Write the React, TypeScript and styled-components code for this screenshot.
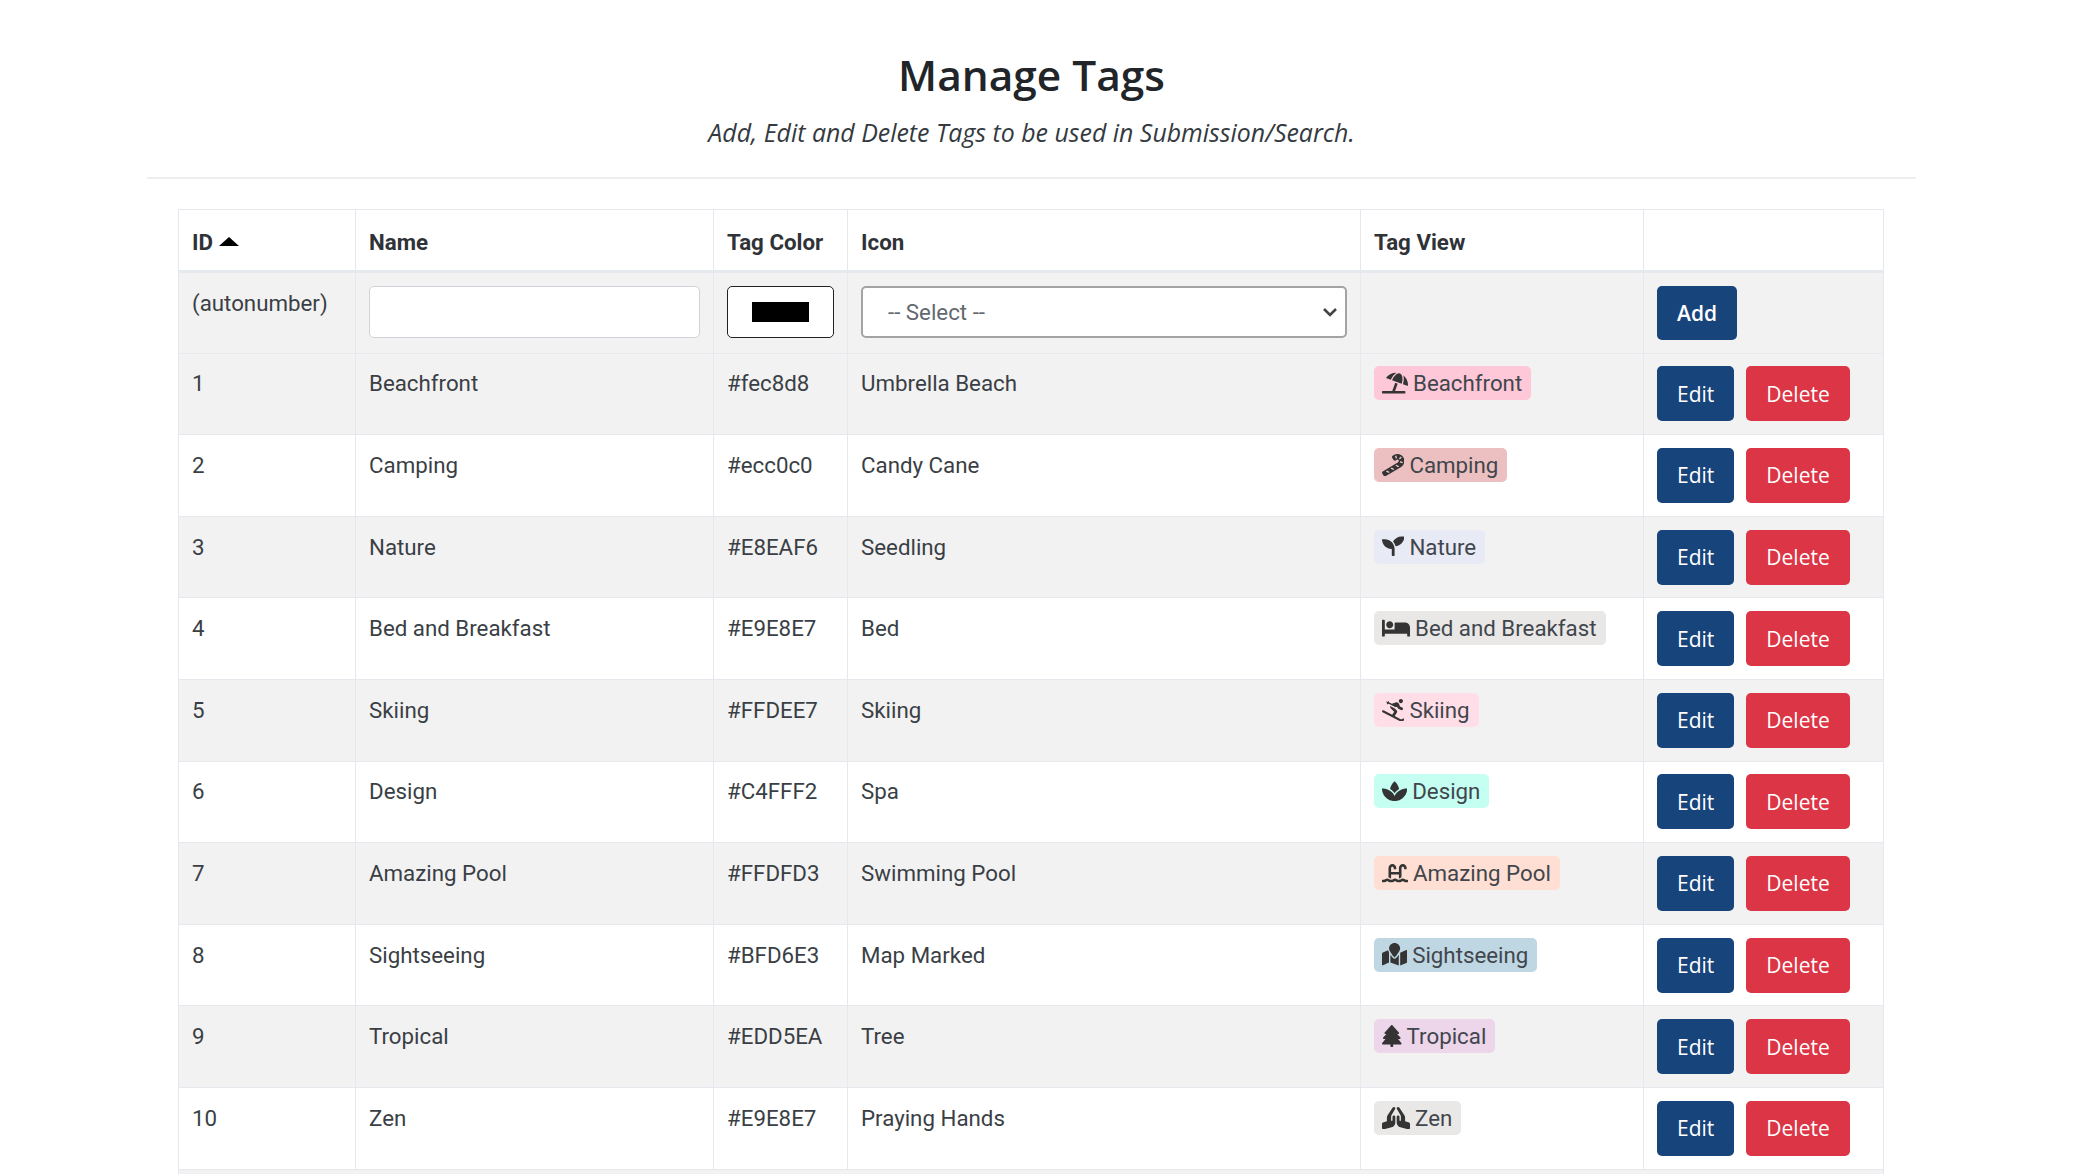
import React from 'react'
import styled, { createGlobalStyle } from 'styled-components'
import {
  FaUmbrellaBeach,
  FaCandyCane,
  FaSeedling,
  FaBed,
  FaSkiing,
  FaSpa,
  FaSwimmingPool,
  FaMapMarked,
  FaPrayingHands
} from 'react-icons/fa'
import { FaTree } from 'react-icons/fa6'

const GlobalStyle = createGlobalStyle`
  html, body {
    margin: 0;
    height: 100%;
    overflow: hidden;
    background: #fff;
  }
  body {
    font-family: Roboto, "Liberation Sans", sans-serif;
    font-size: 22.3px;
    color: #3a3f45;
  }
`

const Page = styled.div`
  width: 1769px;
  margin-left: 147px;
`

const Header = styled.header`
  height: 179px;
  padding-top: 45px;
  box-sizing: border-box;
  border-bottom: 2px solid #eceeef;
  text-align: center;
`

const Title = styled.h1`
  margin: 0;
  font-family: "Open Sans", sans-serif;
  font-size: 42.4px;
  line-height: 60px;
  font-weight: 600;
  color: #212529;
`

const Subtitle = styled.p`
  margin: 10px 0 0;
  font-family: "Open Sans", sans-serif;
  font-size: 24.9px;
  line-height: 34px;
  font-style: italic;
  font-weight: 400;
  color: #343a40;
`

const TableWrap = styled.div`
  padding: 30px 32px 0 31px;
`

const Table = styled.table`
  width: 100%;
  table-layout: fixed;
  border-collapse: collapse;
`

const Th = styled.th`
  height: 62px;
  padding: 3px 13px 0;
  text-align: left;
  font-weight: 700;
  color: #2f3338;
  border: 1.5px solid #e5e9ed;
  border-bottom-width: 3px;
  box-sizing: border-box;
`

const SortArrow = styled.span`
  display: inline-block;
  margin-left: 6px;
  vertical-align: 4px;
  border-left: 10px solid transparent;
  border-right: 10px solid transparent;
  border-bottom: 9px solid #000;
`

const Row = styled.tr<{ $striped: boolean }>`
  background: ${({ $striped }) => ($striped ? '#f2f2f2' : '#fff')};
`

const Td = styled.td`
  padding: 12.8px 13px;
  vertical-align: top;
  border: 1.5px solid #e5e9ed;
  line-height: 34px;
`

const NameInput = styled.input`
  display: block;
  width: 100%;
  height: 52px;
  box-sizing: border-box;
  border: 1.5px solid #ced4da;
  border-radius: 5px;
  background: #fff;
`

const ColorInput = styled.input`
  display: block;
  width: 100%;
  height: 52px;
  box-sizing: border-box;
  padding: 15px 24px;
  border: 1.5px solid #222;
  border-radius: 5px;
  background: #fff;
  &::-webkit-color-swatch-wrapper {
    padding: 0;
  }
  &::-webkit-color-swatch {
    border: 0;
  }
`

const Select = styled.select`
  display: block;
  width: 100%;
  height: 52px;
  box-sizing: border-box;
  padding: 0 25px;
  appearance: none;
  border: 2px solid #a3a3a3;
  border-radius: 5px;
  color: #62686e;
  font-family: Roboto, sans-serif;
  font-size: 22.3px;
  background: #fff url("data:image/svg+xml,%3Csvg xmlns='http://www.w3.org/2000/svg' viewBox='0 0 16 10'%3E%3Cpath d='M2 2l6 6 6-6' fill='none' stroke='%23444' stroke-width='2.6'/%3E%3C/svg%3E") no-repeat right 7px center / 16px 10px;
`

const TagPill = styled.span<{ $color: string; $iconWidth: number }>`
  display: inline-flex;
  align-items: center;
  height: 34px;
  padding: 0 9px 0 8px;
  border-radius: 5px;
  background: ${({ $color }) => $color};
  color: #41464c;
  line-height: 34px;
  white-space: nowrap;

  svg {
    width: ${({ $iconWidth }) => $iconWidth}px;
    height: 22.4px;
    margin-right: 5px;
    color: #343434;
  }
`

const Actions = styled.div`
  display: flex;
  gap: 12px;
`

const Button = styled.button<{ $variant: 'primary' | 'danger'; $bold?: boolean }>`
  height: 55px;
  padding: 0 20px;
  border: 0;
  border-radius: 5px;
  color: #fff;
  font-family: "Open Sans", sans-serif;
  font-size: 21px;
  font-weight: ${({ $bold }) => ($bold ? 600 : 400)};
  background: ${({ $variant }) => ($variant === 'primary' ? '#17447a' : '#dc3545')};
`

const AddButton = styled(Button)`
  height: 54px;
  padding: 0 20px;
`

const tags = [
  { id: 1, name: 'Beachfront', color: '#fec8d8', icon: 'Umbrella Beach', Glyph: FaUmbrellaBeach, iconWidth: 26 },
  { id: 2, name: 'Camping', color: '#ecc0c0', icon: 'Candy Cane', Glyph: FaCandyCane, iconWidth: 22.4 },
  { id: 3, name: 'Nature', color: '#E8EAF6', icon: 'Seedling', Glyph: FaSeedling, iconWidth: 22.4 },
  { id: 4, name: 'Bed and Breakfast', color: '#E9E8E7', icon: 'Bed', Glyph: FaBed, iconWidth: 28 },
  { id: 5, name: 'Skiing', color: '#FFDEE7', icon: 'Skiing', Glyph: FaSkiing, iconWidth: 22.4 },
  { id: 6, name: 'Design', color: '#C4FFF2', icon: 'Spa', Glyph: FaSpa, iconWidth: 25.2 },
  { id: 7, name: 'Amazing Pool', color: '#FFDFD3', icon: 'Swimming Pool', Glyph: FaSwimmingPool, iconWidth: 26 },
  { id: 8, name: 'Sightseeing', color: '#BFD6E3', icon: 'Map Marked', Glyph: FaMapMarked, iconWidth: 25.2 },
  { id: 9, name: 'Tropical', color: '#EDD5EA', icon: 'Tree', Glyph: FaTree, iconWidth: 19.6 },
  { id: 10, name: 'Zen', color: '#E9E8E7', icon: 'Praying Hands', Glyph: FaPrayingHands, iconWidth: 28 }
]

export default function App() {
  return (
    <Page>
      <GlobalStyle />
      <Header>
        <Title>Manage Tags</Title>
        <Subtitle>Add, Edit and Delete Tags to be used in Submission/Search.</Subtitle>
      </Header>
      <TableWrap>
        <Table>
          <colgroup>
            <col style={{ width: 177 }} />
            <col style={{ width: 358 }} />
            <col style={{ width: 134 }} />
            <col style={{ width: 513 }} />
            <col style={{ width: 283 }} />
            <col />
          </colgroup>
          <thead>
            <tr>
              <Th>
                ID<SortArrow />
              </Th>
              <Th>Name</Th>
              <Th>Tag Color</Th>
              <Th>Icon</Th>
              <Th>Tag View</Th>
              <Th />
            </tr>
          </thead>
          <tbody>
            <Row $striped>
              <Td>(autonumber)</Td>
              <Td>
                <NameInput type="text" />
              </Td>
              <Td>
                <ColorInput type="color" defaultValue="#000000" />
              </Td>
              <Td>
                <Select defaultValue="">
                  <option value="">-- Select --</option>
                </Select>
              </Td>
              <Td />
              <Td>
                <AddButton $variant="primary" $bold>
                  Add
                </AddButton>
              </Td>
            </Row>
            {tags.map(({ id, name, color, icon, Glyph, iconWidth }, index) => (
              <Row key={id} $striped={index % 2 === 0}>
                <Td>{id}</Td>
                <Td>{name}</Td>
                <Td>{color}</Td>
                <Td>{icon}</Td>
                <Td>
                  <TagPill $color={color} $iconWidth={iconWidth}>
                    <Glyph />
                    {name}
                  </TagPill>
                </Td>
                <Td>
                  <Actions>
                    <Button $variant="primary">Edit</Button>
                    <Button $variant="danger">Delete</Button>
                  </Actions>
                </Td>
              </Row>
            ))}
            <Row $striped>
              <Td colSpan={6}>&nbsp;</Td>
            </Row>
          </tbody>
        </Table>
      </TableWrap>
    </Page>
  )
}
